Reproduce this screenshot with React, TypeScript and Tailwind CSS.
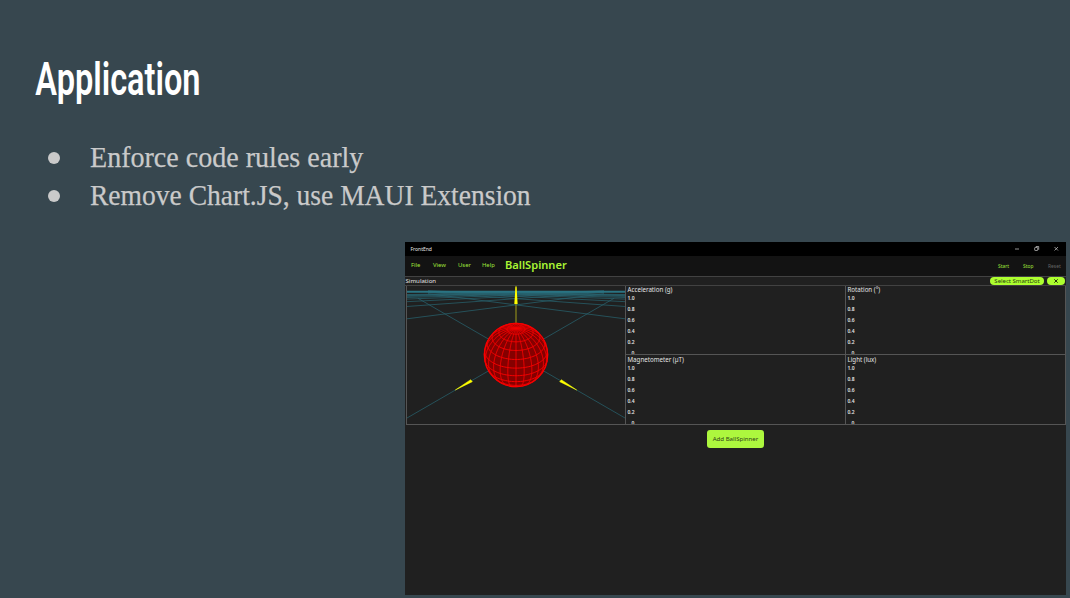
import React from "react";

const CX = 336;
const CY = 213;
const R = 95;
const RAD = Math.PI / 180;
const TILT = 32.7 * RAD;

function project(polar: number, lon: number) {
  const x = Math.sin(polar) * Math.sin(lon);
  const y = Math.cos(polar);
  const z = Math.sin(polar) * Math.cos(lon);
  return {
    x: CX + R * x,
    y: CY - R * (y * Math.cos(TILT) - z * Math.sin(TILT)),
    depth: y * Math.sin(TILT) + z * Math.cos(TILT),
  };
}

function tracePath(points: { x: number; y: number; depth: number }[]) {
  let d = "";
  let drawing = false;
  for (const p of points) {
    if (p.depth < -0.01) {
      drawing = false;
      continue;
    }
    d += `${drawing ? "L" : "M"}${p.x.toFixed(1)} ${p.y.toFixed(1)}`;
    drawing = true;
  }
  return d;
}

const steps = Array.from({ length: 121 }, (_, i) => i / 120);
const parallels = Array.from({ length: 10 }, (_, i) =>
  tracePath(steps.map((t) => project((i + 1) * 16.36 * RAD, (t * 360 - 180) * RAD)))
);
const meridians = Array.from({ length: 24 }, (_, i) =>
  tracePath(steps.map((t) => project(t * Math.PI, i * 15 * RAD)))
);
const gridSlopes = Array.from({ length: 9 }, (_, i) => 1 / (1.73 + 6.1 * (i + 1)));

function Scene() {
  return (
    <svg viewBox="9 6 654 414" className="block h-full w-full" preserveAspectRatio="none">
      <g stroke="#2b7484" fill="none">
        <g strokeWidth="2.2" opacity="0.8">
          <path d="M9 402L630 43M663 402L42 43" />
          {gridSlopes.map((s, i) => (
            <path key={i} d={`M0 ${20 + 670 * s}L600 ${20 + 70 * s}M672 ${20 + 670 * s}L72 ${20 + 70 * s}`} />
          ))}
        </g>
        <path d="M9 23H663" strokeWidth="6" stroke="#2a7483" />
      </g>
      <path d="M336 10V120" stroke="#827f1c" strokeWidth="4" />
      <path d="M334.5 7H337.500L341 60H331Z" fill="#ffff00" />
      <path d="M154 318L200 287L205 293Z" fill="#ffff00" stroke="#ffff00" strokeWidth="1.5" />
      <path d="M518 318L472 287L467 293Z" fill="#ffff00" stroke="#ffff00" strokeWidth="1.5" />
      <circle cx={CX} cy={CY} r={R} fill="#850000" stroke="#f00" strokeWidth="4" />
      <g stroke="#f40000" strokeWidth="3" fill="none">
        {parallels.map((d, i) => (
          <path key={i} d={d} />
        ))}
        {meridians.map((d, i) => (
          <path key={i} d={d} />
        ))}
      </g>
    </svg>
  );
}

function Chart({ title }: { title: string }) {
  return (
    <div className="flex h-full min-w-0 flex-col overflow-hidden pl-[1.500px] text-[#e4e4e4]">
      <div className="h-[7.500px] shrink-0 whitespace-nowrap text-[6.200px] leading-[8px]">{title}</div>
      {["1.0", "0.8", "0.6", "0.4", "0.2", "0"].map((v) => (
        <div
          key={v}
          className={
            "h-[11.2px] shrink-0 text-[5px] font-semibold leading-[8px] " + (v === "0" ? "pl-[4px]" : "")
          }
        >
          {v}
        </div>
      ))}
    </div>
  );
}

function AppWindow() {
  return (
    <section className="mt-[30px] ml-[405px] flex h-[353px] w-[661px] flex-col bg-[#202020] font-['Noto_Sans','Open_Sans',sans-serif]">
      <header className="flex h-[14px] shrink-0 items-center justify-between bg-black pr-[7.500px] pl-[5.500px]">
        <span className="text-[5px] leading-[14px] text-[#e8e8e8]">FrontEnd</span>
        <svg width="46" height="8" viewBox="0 0 46 8" fill="none" stroke="#d0d0d0" strokeWidth="0.7">
          <path d="M2 4H6M41.500 2L45 5.500M45 2L41.500 5.500" />
          <rect x="21.700" y="2.500" width="3" height="3" rx="0.500" />
          <path d="M22.800 1.500H25.700V4.800" />
        </svg>
      </header>
      <nav className="flex h-[20px] shrink-0 bg-[#131313] text-[#9fe33a]">
        <div className="flex pl-[6px] text-[5.9px] leading-[18px]">
          <span className="w-[22px]">File</span>
          <span className="w-[25px]">View</span>
          <span className="w-[24px]">User</span>
          <span className="w-[23px]">Help</span>
        </div>
        <h2 className="text-[11.100px] leading-[18px] font-semibold text-[#a8f534]">BallSpinner</h2>
        <div className="ml-auto flex text-[4.900px] leading-[21px]">
          <span className="w-[25px]">Start</span>
          <span className="w-[25px]">Stop</span>
          <span className="w-[18px] text-[#666]">Reset</span>
        </div>
      </nav>
      <div className="flex h-[10px] shrink-0 items-center border-y border-[#424242] bg-[#202020] pr-[1px] pl-[0.5px] text-[6.100px]">
        <span className="leading-[8px] text-[#e4e4e4]">Simulation</span>
        <button className="mr-[3px] ml-auto flex h-[8px] w-[54px] items-center justify-center rounded-full bg-[#adff2f] text-[6px] leading-[8px] whitespace-nowrap text-[#283c12]">
          Select SmartDot
        </button>
        <button className="flex h-[8px] w-[18px] items-center justify-center rounded-full bg-[#adff2f]">
          <svg width="4" height="4" viewBox="0 0 4 4" stroke="#172008" strokeWidth="0.9">
            <path d="M0.300 0.300L3.700 3.700M3.700 0.300L0.300 3.700" />
          </svg>
        </button>
      </div>
      <div className="ml-[1px] grid h-[139px] shrink-0 grid-cols-[219px_220px_220px] border-b-[1.500px] border-l border-[#555]">
        <div className="h-[138px] border-r border-[#555]">
          <Scene />
        </div>
        {[
          ["Acceleration (g)", "Magnetometer (µT)"],
          ["Rotation (°)", "Light (lux)"],
        ].map(([top, bottom]) => (
          <div key={top} className="grid h-[138px] grid-rows-[69px_69px] border-r border-[#555]">
            <div className="overflow-hidden border-b border-[#555]">
              <Chart title={top} />
            </div>
            <div className="overflow-hidden pt-[1px]">
              <Chart title={bottom} />
            </div>
          </div>
        ))}
      </div>
      <button className="mt-[5px] flex h-[18px] w-[57px] items-center justify-center self-center rounded-[3px] bg-[#adf73e] text-[6.100px] text-[#2d4217]">
        Add BallSpinner
      </button>
    </section>
  );
}

const bullets = [
  { text: "Enforce code rules early", fit: "scale-x-[0.935]" },
  { text: "Remove Chart.JS, use MAUI Extension", fit: "scale-x-[0.918]" },
];

export default function App() {
  return (
    <main className="h-[598px] w-[1070px] overflow-hidden bg-[#37474f]">
      <h1 className="h-[138px] w-[300px] origin-left scale-x-[0.707] pt-[50px] pl-[50px] font-['Roboto',sans-serif] text-[46px] leading-[59px] font-semibold whitespace-nowrap text-white">
        Application
      </h1>
      <ul className="h-[74px] font-['Liberation_Serif',serif] text-[30px] leading-[38px] text-[#cacaca]">
        {bullets.map(({ text, fit }) => (
          <li key={text} className="flex h-[38px] items-center pl-[48px]">
            <span className="mt-[2px] mr-[30px] size-[12px] shrink-0 rounded-full bg-[#cacaca]" />
            <span className={"origin-left whitespace-nowrap [-webkit-text-stroke:0.25px_#cacaca] " + fit}>{text}</span>
          </li>
        ))}
      </ul>
      <AppWindow />
    </main>
  );
}
